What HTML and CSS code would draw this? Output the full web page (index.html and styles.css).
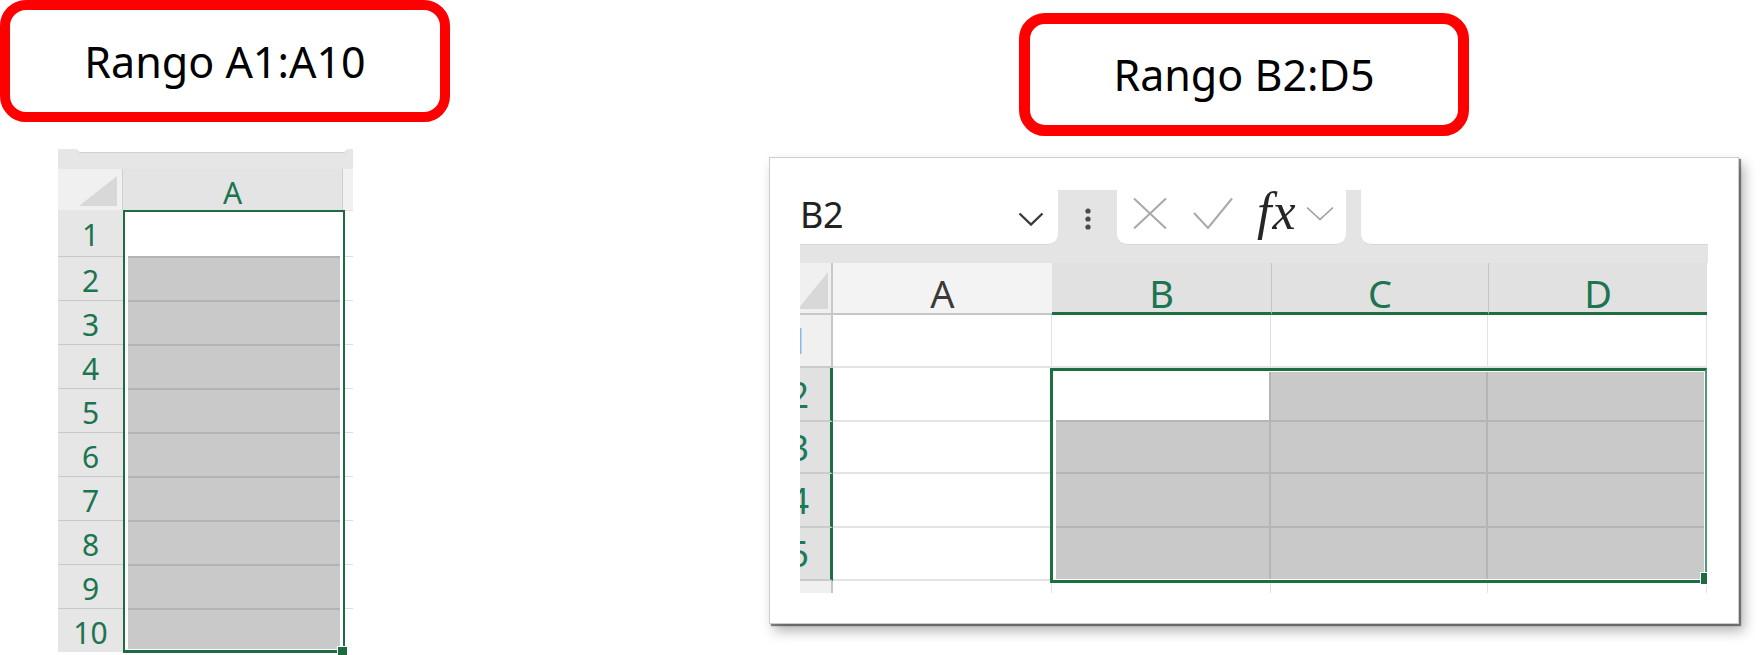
FILE: index.html
```html
<!DOCTYPE html>
<html lang="es">
<head>
<meta charset="utf-8">
<title>Rangos</title>
<link rel="stylesheet" href="styles.css">
</head>
<body>
<div class="page">
  <section class="col-left">
    <div class="label label-left">Rango A1:A10</div>
    <div class="sheet1">
      <div class="s1-top"><div class="s1-input"></div></div>
      <div class="s1-head">
        <div class="s1-corner"><span class="tri tri-s"></span></div>
        <div class="s1-colA">A</div>
        <div class="s1-colB"></div>
      </div>
      <div class="s1-body">
        <div class="s1-rowheads">
          <div class="s1-rh first">1</div>
          <div class="s1-rh">2</div>
          <div class="s1-rh">3</div>
          <div class="s1-rh">4</div>
          <div class="s1-rh">5</div>
          <div class="s1-rh">6</div>
          <div class="s1-rh">7</div>
          <div class="s1-rh">8</div>
          <div class="s1-rh">9</div>
          <div class="s1-rh">10</div>
        </div>
        <div class="s1-sel">
          <div class="s1-blank"></div>
          <div class="s1-cell"></div>
          <div class="s1-cell"></div>
          <div class="s1-cell"></div>
          <div class="s1-cell"></div>
          <div class="s1-cell"></div>
          <div class="s1-cell"></div>
          <div class="s1-cell"></div>
          <div class="s1-cell"></div>
          <div class="s1-cell last"></div>
          <span class="handle handle-s"></span>
        </div>
        <div class="s1-rest">
          <div class="s1-rc first"></div>
          <div class="s1-rc"></div>
          <div class="s1-rc"></div>
          <div class="s1-rc"></div>
          <div class="s1-rc"></div>
          <div class="s1-rc"></div>
          <div class="s1-rc"></div>
          <div class="s1-rc"></div>
          <div class="s1-rc"></div>
          <div class="s1-rc"></div>
        </div>
      </div>
    </div>
  </section>

  <section class="col-right">
    <div class="label label-right">Rango B2:D5</div>
    <div class="win">
      <div class="fbar">
        <div class="namebox">
          <span class="nb-text">B2</span>
          <svg class="nb-chev" width="26" height="14" viewBox="0 0 26 14"><polyline points="1.5,1.5 13,12.5 24.5,1.5" fill="none" stroke="#3a3a3a" stroke-width="2.4"/></svg>
        </div>
        <div class="fgap">
          <svg width="6" height="22" viewBox="0 0 6 22"><circle cx="3" cy="3" r="2.6" fill="#4a4a4a"/><circle cx="3" cy="11" r="2.6" fill="#4a4a4a"/><circle cx="3" cy="19" r="2.6" fill="#4a4a4a"/></svg>
        </div>
        <div class="fbtns">
          <svg class="ic-x" width="36" height="33" viewBox="0 0 36 33"><path d="M2 1.5 L34 31.5 M34 1.5 L2 31.5" fill="none" stroke="#a9a9a9" stroke-width="2"/></svg>
          <svg class="ic-ok" width="40" height="33" viewBox="0 0 40 33"><polyline points="1,16 15,31 39,1.5" fill="none" stroke="#a9a9a9" stroke-width="2"/></svg>
          <span class="fx">fx</span>
          <svg class="ic-chev" width="28" height="15" viewBox="0 0 28 15"><polyline points="1,1.5 14,13.5 27,1.5" fill="none" stroke="#9c9c9c" stroke-width="1.6"/></svg>
        </div>
        <div class="fgap2"></div>
        <div class="finput"></div>
      </div>
      <div class="band"></div>
      <div class="grid2">
        <div class="h-corner"><span class="tri tri-l"></span></div>
        <div class="h-a">A</div>
        <div class="h-sel">B</div>
        <div class="h-sel sep">C</div>
        <div class="h-sel sep">D</div>

        <div class="rh r-un"><span class="dg blue">1</span></div>
        <div class="c"></div>
        <div class="c"></div>
        <div class="c"></div>
        <div class="c"></div>

        <div class="rh r-sel"><span class="dg">2</span></div>
        <div class="c ca"></div>
        <div class="sel">
          <div class="sel-grid">
            <div class="sc white"></div>
            <div class="sc"></div>
            <div class="sc"></div>
            <div class="sc"></div>
            <div class="sc"></div>
            <div class="sc"></div>
            <div class="sc"></div>
            <div class="sc"></div>
            <div class="sc"></div>
            <div class="sc"></div>
            <div class="sc"></div>
            <div class="sc"></div>
          </div>
          <span class="handle handle-l"></span>
        </div>

        <div class="rh r-sel"><span class="dg">3</span></div>
        <div class="c ca"></div>
        <div class="rh r-sel"><span class="dg">4</span></div>
        <div class="c ca"></div>
        <div class="rh r-sel"><span class="dg">5</span></div>
        <div class="c ca"></div>

        <div class="rh r-un last"></div>
        <div class="c last"></div>
        <div class="c last"></div>
        <div class="c last"></div>
        <div class="c last"></div>
      </div>
    </div>
  </section>
</div>
</body>
</html>
```

FILE: styles.css
```css
* { box-sizing: border-box; }

html, body {
  margin: 0;
  padding: 0;
  background: #ffffff;
}

body {
  width: 1761px;
  height: 655px;
  overflow: hidden;
  font-family: "Noto Sans", "Open Sans", sans-serif;
}

.page {
  display: flex;
  align-items: flex-start;
}

/* ---------- labels ---------- */
.label {
  width: 450px;
  display: flex;
  align-items: center;
  justify-content: center;
  border: 10px solid #ff0000;
  border-radius: 26px;
  background: #ffffff;
  color: #000000;
  font-family: "Noto Sans", sans-serif;
  font-size: 43px;
  white-space: nowrap;
}

.label-left {
  height: 122px;
}

.label-right {
  height: 123px;
  border-width: 11px;
  margin: 13px 0 0 250px;
}

.col-left {
  width: 450px;
  flex: none;
}

.col-right {
  flex: none;
  margin-left: 319px;
}

/* ---------- left sheet ---------- */
.sheet1 {
  margin: 27px 0 0 58px;
  width: 295px;
}

.s1-top {
  height: 20px;
  background: #e6e6e6;
  padding-left: 19px;
}

.s1-input {
  width: 270px;
  height: 4px;
  background: #ffffff;
  border-bottom: 1px solid #d2d2d2;
  border-radius: 0 0 6px 6px;
}

.s1-head {
  display: flex;
  height: 41px;
}

.s1-corner {
  width: 65px;
  background: #f0f0f0;
  border-right: 1px solid #d0d0d0;
  display: flex;
  align-items: flex-end;
  justify-content: flex-end;
  padding: 0 5px 4px 0;
}

.tri {
  display: block;
  background: #d8d8d8;
  clip-path: polygon(100% 0, 100% 100%, 0 100%);
}

.tri-s {
  width: 38px;
  height: 30px;
}

.s1-colA {
  width: 220px;
  background: #e4e4e4;
  border-right: 1px solid #cdcdcd;
  color: #1c7450;
  font-size: 30px;
  display: flex;
  align-items: center;
  justify-content: center;
  padding-top: 5px;
}

.s1-colB {
  flex: 1;
  background: #f1f1f1;
}

.s1-body {
  display: flex;
}

.s1-rowheads {
  width: 65px;
  display: flex;
  flex-direction: column;
}

.s1-rh {
  height: 44px;
  background: #e6e6e6;
  border-top: 1px solid #c9c9c9;
  color: #1c7450;
  font-size: 30px;
  display: flex;
  align-items: center;
  justify-content: center;
  padding-top: 3px;
}

.s1-rh.first {
  height: 46px;
  border-top: none;
}

.s1-sel {
  position: relative;
  width: 222px;
  border: 2px solid #1d6b41;
  border-bottom-width: 3px;
  background: #ffffff;
  padding: 0 3px 1px 3px;
  display: flex;
  flex-direction: column;
}

.s1-blank {
  height: 44px;
}

.s1-cell {
  height: 44px;
  background: #c9c9c9;
  border-top: 2px solid #b3b3b3;
}

.s1-cell.last {
  height: 41px;
}

.handle {
  position: absolute;
  background: #1d6b41;
  border: 1px solid #ffffff;
}

.handle-s {
  right: -5px;
  bottom: -6px;
  width: 11px;
  height: 10px;
}

.s1-rest {
  flex: 1;
  display: flex;
  flex-direction: column;
}

.s1-rc {
  height: 44px;
  border-top: 1px solid #dedede;
}

.s1-rc.first {
  height: 46px;
  border-top: 1px solid #e2e2e2;
}

/* ---------- right window ---------- */
.win {
  margin-top: 21px;
  width: 970px;
  height: 467px;
  background: #ffffff;
  border: 1px solid #cdcdcd;
  padding: 32px 30px 0 30px;
  box-shadow: 2px 2px 1px rgba(0, 0, 0, 0.45), 5px 7px 12px rgba(0, 0, 0, 0.3);
}

.fbar {
  display: flex;
  height: 55px;
  background: #e4e4e4;
}

.namebox {
  width: 258px;
  background: #ffffff;
  border-bottom-right-radius: 10px;
  border-bottom: 1px solid #d6d6d6;
  display: flex;
  align-items: center;
  justify-content: space-between;
  padding: 0 14px 6px 0;
}

.nb-text {
  font-size: 36px;
  color: #222222;
  letter-spacing: -0.5px;
}

.nb-chev {
  margin-top: 10px;
}

.fgap {
  width: 59px;
  display: flex;
  align-items: center;
  justify-content: center;
  padding-top: 2px;
}

.fbtns {
  width: 229px;
  background: #ffffff;
  border-radius: 0 0 10px 10px;
  border-bottom: 1px solid #d6d6d6;
  display: flex;
  align-items: center;
  padding: 0 0 7px 15px;
}

.ic-ok {
  margin-left: 25px;
}

.fx {
  margin-left: 24px;
  font-family: "Liberation Serif", "DejaVu Serif", serif;
  font-style: italic;
  font-size: 52px;
  line-height: 1;
  color: #262626;
  letter-spacing: 1px;
  margin-top: -4px;
}

.ic-chev {
  margin-left: 9px;
}

.fgap2 {
  width: 15px;
}

.finput {
  flex: 1;
  background: #ffffff;
  border-bottom-left-radius: 10px;
  border-bottom: 1px solid #d6d6d6;
}

.band {
  height: 18px;
  background: #e4e4e4;
}

.grid2 {
  display: grid;
  grid-template-columns: 33px 219px 219px 217px 219px;
  grid-template-rows: 52px 53px 54px 52px 54px 53px 12px;
  font-size: 38px;
}

.h-corner {
  background: #f0f0f0;
  border-right: 2px solid #c8c8c8;
  border-bottom: 2px solid #c8c8c8;
  display: flex;
  align-items: flex-end;
  justify-content: flex-end;
  padding: 0 3px 4px 0;
  overflow: hidden;
}

.tri-l {
  width: 30px;
  height: 37px;
  flex: none;
}

.h-a,
.h-sel {
  display: flex;
  align-items: center;
  justify-content: center;
  padding-top: 10px;
}

.h-a {
  background: #f3f3f3;
  border-bottom: 2px solid #c6c6c6;
  color: #3a3a3a;
}

.h-sel {
  background: #e1e1e1;
  border-bottom: 3px solid #1e6e42;
  color: #1c7450;
}

.h-sel.sep {
  border-left: 1px solid #c4c4c4;
}

.rh {
  display: flex;
  align-items: center;
  justify-content: flex-end;
  padding-right: 21px;
  overflow: hidden;
  white-space: nowrap;
  font-size: 36px;
  border-bottom: 2px solid #cacaca;
}

.r-un {
  background: #f0f0f0;
  border-right: 2px solid #c6c6c6;
  padding-right: 22px;
}

.r-sel {
  background: #e1e1e1;
  border-right: 3px solid #1e6e42;
}

.rh.last {
  border-bottom: none;
}

.dg {
  color: #1c7a5a;
  flex: none;
}

.dg.blue {
  color: #8fb6ea;
}

.c {
  border-right: 1px solid #e3e3e3;
  border-bottom: 2px solid #e3e3e3;
}

.c.ca {
  border-right: none;
}

.c.last {
  border-bottom: none;
}

.sel {
  grid-column: 3 / 6;
  grid-row: 3 / 7;
  position: relative;
  margin: 0 0 -2px -2px;
  border: 3px solid #1e6e42;
  border-right: 2px solid #4f9a72;
  background: #ffffff;
  padding: 1px 1px 1px 3px;
}

.sel-grid {
  height: 100%;
  display: grid;
  grid-template-columns: 213px 215px 1fr;
  grid-template-rows: 48px 50px 52px 1fr;
  gap: 2px;
  background: #b5b5b5;
}

.sc {
  background: #c9c9c9;
}

.sc.white {
  background: #ffffff;
}

.handle-l {
  right: -3px;
  bottom: -5px;
  width: 8px;
  height: 13px;
}
```
